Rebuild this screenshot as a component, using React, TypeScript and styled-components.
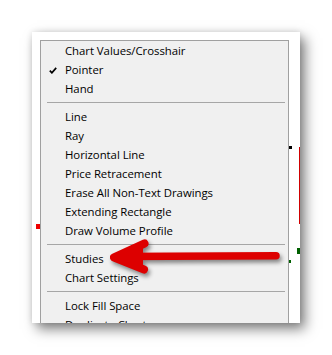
import React from "react";
import styled, { createGlobalStyle } from "styled-components";

const Global = createGlobalStyle`
  html, body { margin: 0; padding: 0; background: #ffffff; }
  body { width: 332px; height: 355px; overflow: hidden; }
`;

const Stage = styled.div`
  width: 332px;
  height: 355px;
  padding: 32px 0 0 32px;
  box-sizing: border-box;
`;

const Card = styled.div`
  position: relative;
  width: 268px;
  height: 291px;
  background: #ffffff;
  box-shadow: 5px 6px 12px rgba(0, 0, 0, 0.5), 0 0 6px rgba(0, 0, 0, 0.12);
  overflow: hidden;
  padding: 8px 0 0 8px;
  box-sizing: border-box;
`;

const Menu = styled.div`
  width: 249px;
  background: #f0f0f0;
  border: 1px solid #a0a0a0;
  box-sizing: border-box;
  display: flex;
  flex-direction: column;
  font-family: "Open Sans", "Noto Sans", sans-serif;
  font-size: 11.4px;
  color: #000000;
`;

const Item = styled.div`
  height: 19px;
  display: grid;
  grid-template-columns: 24px 1fr;
  align-items: center;
  white-space: nowrap;
  letter-spacing: -0.05px;
`;

const CheckCell = styled.div`
  display: flex;
  justify-content: flex-end;
  padding-right: 8px;
  padding-top: 1px;
`;

const Separator = styled.div`
  height: 9px;
  display: flex;
  align-items: center;
  padding: 0 3px 0 6px;
  &::after {
    content: "";
    flex: 1;
    height: 1px;
    background: #a6a6a6;
  }
`;

const Mark = styled.div<{ $x: number; $y: number; $w: number; $h: number; $c: string }>`
  position: absolute;
  left: ${(p) => p.$x}px;
  top: ${(p) => p.$y}px;
  width: ${(p) => p.$w}px;
  height: ${(p) => p.$h}px;
  background: ${(p) => p.$c};
`;

const ArrowSvg = styled.svg`
  position: absolute;
  left: 0;
  top: 0;
  overflow: visible;
  filter: drop-shadow(2px 3px 2px rgba(0, 0, 0, 0.45));
`;

type Entry = { label: string; checked?: boolean } | "sep";

const entries: Entry[] = [
  { label: "Chart Values/Crosshair" },
  { label: "Pointer", checked: true },
  { label: "Hand" },
  "sep",
  { label: "Line" },
  { label: "Ray" },
  { label: "Horizontal Line" },
  { label: "Price Retracement" },
  { label: "Erase All Non-Text Drawings" },
  { label: "Extending Rectangle" },
  { label: "Draw Volume Profile" },
  "sep",
  { label: "Studies" },
  { label: "Chart Settings" },
  "sep",
  { label: "Lock Fill Space" },
  { label: "Duplicate Chart" },
];

export default function App() {
  return (
    <>
      <Global />
      <Stage>
        <Card>
          <Menu>
            {entries.map((e, i) =>
              e === "sep" ? (
                <Separator key={i} />
              ) : (
                <Item key={i}>
                  <CheckCell>
                    {e.checked && (
                      <svg width="8" height="7" viewBox="0 0 8 7">
                        <path d="M0.8 3.6 L2.9 5.8 L7.2 0.9" fill="none" stroke="#000" strokeWidth="1.7" />
                      </svg>
                    )}
                  </CheckCell>
                  <span>{e.label}</span>
                </Item>
              )
            )}
          </Menu>
          {/* chart fragments on the canvas behind the menu */}
          <Mark $x={257} $y={114} $w={3} $h={3} $c="#000000" />
          <Mark $x={267} $y={115} $w={1} $h={77} $c="#d00000" />
          <Mark $x={265} $y={216} $w={3} $h={6} $c="#006000" />
          <Mark $x={257} $y={228} $w={2} $h={3} $c="#006000" />
          <Mark $x={4} $y={192} $w={4} $h={5} $c="#ee0000" />
          <ArrowSvg width="268" height="291">
            <g transform="translate(-32,-32)" stroke="#dd0000" strokeLinecap="round" strokeLinejoin="round" fill="none">
              <path d="M118 256.5 L276 255.8" strokeWidth="7.5" />
              <path d="M144.5 243.5 L114 257.5 L144 269.5" strokeWidth="8" />
              <path d="M118 257.5 L141 248.5 L141 266 Z" fill="#dd0000" strokeWidth="4" />
            </g>
          </ArrowSvg>
        </Card>
      </Stage>
    </>
  );
}
